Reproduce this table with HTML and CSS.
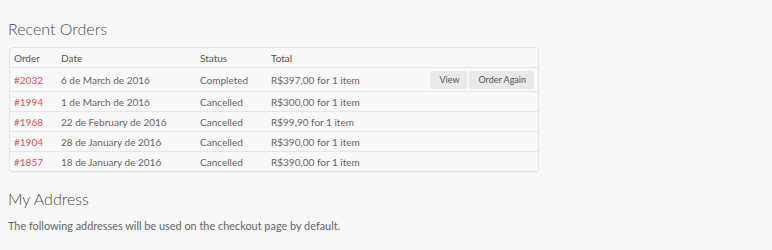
FILE: index.html
```html
<!DOCTYPE html>
<html>
<head>
<meta charset="utf-8">
<link rel="stylesheet" href="styles.css">
</head>
<body>
<h2 class="title">Recent Orders</h2>
<table class="orders">
  <thead>
    <tr><th class="c-order">Order</th><th class="c-date">Date</th><th class="c-status">Status</th><th class="c-total">Total</th><th class="c-actions"></th></tr>
  </thead>
  <tbody>
    <tr class="tall"><td><a href="#">#2032</a></td><td>6 de March de 2016</td><td>Completed</td><td>R$397,00 for 1 item</td><td class="actions"><span class="btn">View</span><span class="btn">Order Again</span></td></tr>
    <tr><td><a href="#">#1994</a></td><td>1 de March de 2016</td><td>Cancelled</td><td>R$300,00 for 1 item</td><td class="actions"></td></tr>
    <tr><td><a href="#">#1968</a></td><td>22 de February de 2016</td><td>Cancelled</td><td>R$99,90 for 1 item</td><td class="actions"></td></tr>
    <tr><td><a href="#">#1904</a></td><td>28 de January de 2016</td><td>Cancelled</td><td>R$390,00 for 1 item</td><td class="actions"></td></tr>
    <tr><td><a href="#">#1857</a></td><td>18 de January de 2016</td><td>Cancelled</td><td>R$390,00 for 1 item</td><td class="actions"></td></tr>
  </tbody>
</table>
<h2 class="title second">My Address</h2>
<p class="note">The following addresses will be used on the checkout page by default.</p>
</body>
</html>
```

FILE: styles.css
```css
html, body {
  margin: 0;
  background: #f7f7f7;
}
body {
  padding: 0 8px;
  font-family: Lato, "Noto Sans", sans-serif;
  color: #666;
  font-size: 10px;
}
.title {
  margin: 0;
  padding-top: 19px;
  font-size: 16px;
  line-height: 20px;
  font-weight: 300;
  color: #4a4a4a;
}
.orders {
  margin-top: 8px;
  margin-left: 1px;
  width: 530px;
  border: 1px solid #e4e4e4;
  border-radius: 3px;
  border-collapse: separate;
  border-spacing: 0;
  background: #f8f8f8;
  box-shadow: 0 1px 1px rgba(0,0,0,0.03);
}
.orders th, .orders td {
  text-align: left;
  padding: 0 0 0 4px;
  height: 19px;
  font-weight: 400;
  vertical-align: middle;
  white-space: nowrap;
}
.orders th {
  color: #555;
  border-bottom: 1px solid #e4e4e4;
}
.orders tbody td {
  border-bottom: 1px solid #e6e6e6;
}
.orders tbody tr:last-child td {
  border-bottom: none;
}
.orders tr.tall td {
  height: 23px;
}
.c-order { width: 43px; }
.c-date { width: 135px; }
.c-status { width: 67px; }
.c-total { width: 130px; }
.orders a {
  color: #e2524e;
  text-decoration: none;
}
.actions {
  text-align: right !important;
  padding-right: 4px !important;
}
.btn {
  display: inline-block;
  background: #e9e9e9;
  color: #555;
  font-size: 9px;
  height: 18px;
  line-height: 18px;
  padding: 0 8px 0 9px;
  border-radius: 2px;
  margin-left: 2px;
}
.second {
  padding-top: 17px;
}
.note {
  margin: 10px 0 0;
  font-size: 10.9px;
  color: #666;
}
```
